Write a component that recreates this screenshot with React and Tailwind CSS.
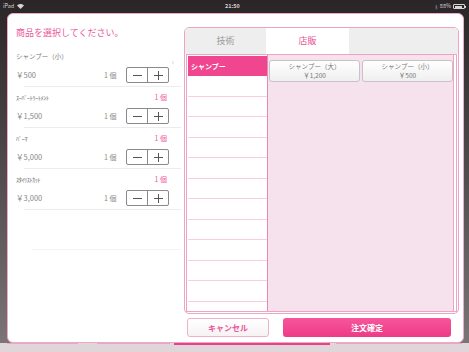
import React from "react";

const F = { fontFamily: '"Noto Sans CJK JP", "Noto Sans", sans-serif' };

function Stepper() {
  return (
    <div className="flex h-[16px] w-[43px] rounded-[2px] border border-[#8a8a8a] bg-white">
      <div className="flex flex-1 items-center justify-center border-r border-[#8a8a8a]">
        <div className="h-[1px] w-[9px] bg-[#555]" />
      </div>
      <div className="relative flex flex-1 items-center justify-center">
        <div className="h-[1px] w-[9px] bg-[#555]" />
        <div className="absolute h-[9px] w-[1px] bg-[#555]" />
      </div>
    </div>
  );
}

function Item({ name, half, price, pinkQty }) {
  return (
    <div className="flex flex-col">
      <div className="flex h-[13px] items-center justify-between pr-[16px]">
        <span className={half ? "text-[6px] text-[#666] tracking-[-0.3px]" : "text-[6.5px] text-[#777]"}>{name}</span>
        {pinkQty && <span className="text-[7px] text-[#ec5b9d]">1 個</span>}
      </div>
      <div className="mt-[4px] flex h-[16px] items-center">
        <span className="w-[88px] text-[7.5px] text-[#888]">{price}</span>
        <span className="w-[22px] text-[7px] text-[#888]">1 個</span>
        <Stepper />
      </div>
      <div className="ml-[8px] mr-[2px] mt-[3px] h-[1px] bg-[#ececec]" />
    </div>
  );
}

export default function App() {
  const rows = Array.from({ length: 11 });
  return (
    <div style={F} className="flex h-[352px] w-[469px] flex-col overflow-hidden bg-gradient-to-b from-[#2a2526] to-[#7d7779]">
      {/* status bar */}
      <div className="relative flex h-[13px] shrink-0 items-center justify-between px-[3px] text-[5.5px] text-[#d8d4d5]">
        <div className="flex items-center gap-[3px]">
          <span>iPad</span>
          <svg width="7" height="5" viewBox="0 0 10 7"><path d="M5 7 L0 2 A7 7 0 0 1 10 2 Z" fill="#d8d4d5" /></svg>
        </div>
        <span className="absolute left-[225px] font-semibold">21:50</span>
        <div className="flex items-center gap-[2px]">
          <span className="text-[5px]">ᛒ</span>
          <span>88%</span>
          <div className="flex items-center">
            <div className="h-[5px] w-[12px] rounded-[1px] border border-[#d8d4d5] p-[0.5px]"><div className="h-full w-[85%] bg-[#d8d4d5]" /></div>
            <div className="h-[2px] w-[1px] bg-[#d8d4d5]" />
          </div>
        </div>
      </div>

      <div className="flex flex-1 px-[7px]">
        {/* modal */}
        <div className="flex flex-1 rounded-[6px] border border-[#efa9c8] bg-white">
          {/* left panel */}
          <div className="flex w-[175px] flex-col pl-[8px] pt-[13px]">
            <div className="text-[9px] leading-[12px] text-[#ea5a9c]">商品を選択してください。</div>
            <div className="relative mt-[11px] flex flex-col gap-[4px]">
              <span className="absolute right-[9px] top-[8px] text-[8px] leading-[8px] text-[#c8c8c8]">›</span>
              <Item name="シャンプー（小）" price="￥500" />
              <Item name="ｽｰﾊﾟｰﾄﾘｰﾄﾒﾝﾄ" half price="￥1,500" pinkQty />
              <Item name="ﾊﾟｰﾏ" half price="￥5,000" pinkQty />
              <Item name="ｽﾀｲﾘｽﾄｶｯﾄ" half price="￥3,000" pinkQty />
            </div>
            <div className="ml-[16px] mr-[2px] mt-[39px] h-[1px] bg-[#f3f3f3]" />
          </div>

          {/* right panel */}
          <div className="flex flex-1 flex-col pb-[5px] pl-[1px] pr-[4px] pt-[13px]">
            <div className="flex h-[287px] flex-col overflow-hidden rounded-[5px] border border-[#f0a4c4] bg-white">
              <div className="flex h-[26px] shrink-0 bg-[#eeeeee] text-[9px]">
                <div className="flex w-[81px] items-center justify-center text-[#9a9a9a]">技術</div>
                <div className="flex w-[83px] items-center justify-center bg-white text-[#ea4f93]">店販</div>
              </div>
              <div className="mx-[1px] mb-[1px] flex flex-1 border border-[#f0a4c4] pr-[2px]">
                <div className="flex flex-1 border-r border-[#f0a4c4]">
                  <div className="flex w-[81px] flex-col border-r border-[#e58ab3] pl-[1px] pt-[1px]">
                    <div className="flex h-[20px] items-center bg-[#f0468f] px-[3px] text-[7px] font-bold text-white">シャンプー</div>
                    {rows.map((_, i) => (
                      <div key={i} className="h-[20.5px] shrink-0 border-b border-[#f7cfe0]" />
                    ))}
                  </div>
                  <div className="flex flex-1 items-start gap-[2px] bg-[#f6e2ec] pl-[1px] pt-[5px]">
                    {[["シャンプー（大）", "￥1,200"], ["シャンプー（小）", "￥500"]].map(([n, p]) => (
                      <div key={n} className="flex h-[22px] w-[91px] flex-col items-center justify-center rounded-[3px] border border-[#c9c2c6] bg-gradient-to-b from-white to-[#efefef] text-[6.5px] leading-[9px] text-[#777]">
                        <span>{n}</span>
                        <span>{p}</span>
                      </div>
                    ))}
                  </div>
                </div>
              </div>
            </div>
            <div className="mt-[4px] flex h-[19px] gap-[14px] pl-[3px] pr-[8px]">
              <div className="flex w-[82px] items-center justify-center rounded-[3px] border border-[#efb0cb] bg-gradient-to-b from-white to-[#f7f2f4] text-[8px] font-bold text-[#e9559a]">キャンセル</div>
              <div className="flex flex-1 items-center justify-center rounded-[3px] bg-gradient-to-b from-[#f6559c] to-[#ee3a86] text-[8px] font-bold text-white">注文確定</div>
            </div>
          </div>
        </div>
      </div>

      {/* bottom strip */}
      <div className="flex h-[10px] shrink-0 bg-[#e0d6da]">
        <div className="ml-[7px] h-[1px] w-[71px] bg-[#e9a6c4]" />
        <div className="ml-[19px] h-[1px] w-[73px] bg-[#e9a6c4]" />
        <div className="ml-[4px] h-[2px] w-[156px] bg-[#ea3f89]" />
        <div className="ml-[6px] h-[1px] w-[126px] bg-[#e9a6c4]" />
      </div>
    </div>
  );
}
